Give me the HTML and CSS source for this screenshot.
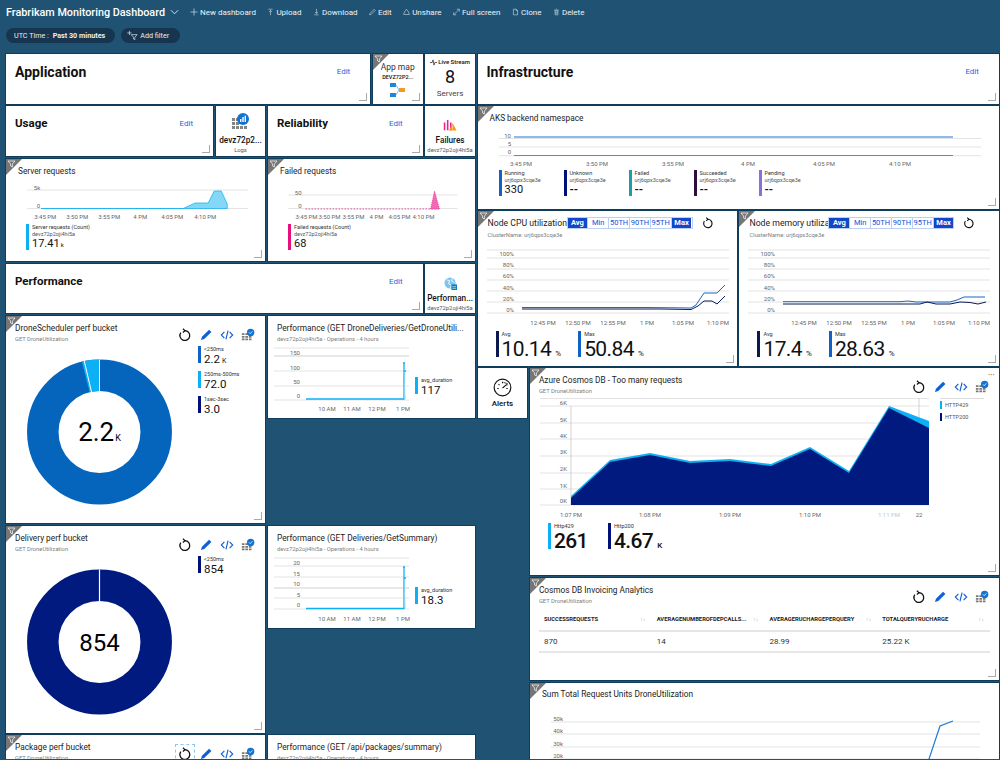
FILE: index.html
```html
<!DOCTYPE html>
<html lang="en">
<head>
    <meta charset="UTF-8">
    <meta name="viewport" content="width=device-width, initial-scale=1.0">
    <title>Frabrikam Monitoring Dashboard</title>
    <link rel="stylesheet" href="styles.css">
</head>
<body>
    <svg class="defs" width="0" height="0">
        <symbol id="i-corner" viewBox="0 0 16 16"><polygon points="0,0 16,0 0,16" fill="#767676"/><path d="M2 2h7L6.4 5v3L4.6 7V5Z" fill="none" stroke="#fff" stroke-width=".7"/></symbol>
        <symbol id="i-refresh" viewBox="0 0 16 16"><path d="M3.2 5.4A5.6 5.6 0 1 0 7.8 3" fill="none" stroke="#111" stroke-width="1.5"/><path d="M5.6 .8 8 3 5.6 5.2" fill="none" stroke="#111" stroke-width="1.4"/></symbol>
        <symbol id="i-pencil" viewBox="0 0 16 16"><path d="M11.5 2 14.2 4.6 6 12.6 2.2 13.8 3.4 10Z" fill="#0f5fd8"/></symbol>
        <symbol id="i-code" viewBox="0 0 16 16"><path d="M5 4.5 1.5 8 5 11.5M11 4.5 14.5 8 11 11.5M9.2 3 6.8 13" fill="none" stroke="#0f5fd8" stroke-width="1.3"/></symbol>
        <symbol id="i-grid" viewBox="0 0 16 16"><path d="M1 6h3v2H1zM5 6h3v2H5zM1 9h3v2H1zM5 9h3v2H5zM9 9h3v2H9zM1 12h3v2H1zM5 12h3v2H5zM9 12h3v2H9z" fill="#777"/><circle cx="11" cy="5" r="4.2" fill="#1173d4"/><path d="M9 5l1.5 1.5L13 3.8" fill="none" stroke="#fff" stroke-width=".9"/></symbol>
        <symbol id="t-plus" viewBox="0 0 10 10"><path d="M5 .5v9M.5 5h9" stroke="#dfe8ef" stroke-width=".8"/></symbol>
        <symbol id="t-up" viewBox="0 0 10 10"><path d="M2 1h6M5 9.5V3M2.8 5 5 2.8 7.2 5" fill="none" stroke="#dfe8ef" stroke-width=".8"/></symbol>
        <symbol id="t-down" viewBox="0 0 10 10"><path d="M2 9h6M5 .5V7M2.8 5 5 7.2 7.2 5" fill="none" stroke="#dfe8ef" stroke-width=".8"/></symbol>
        <symbol id="t-edit" viewBox="0 0 10 10"><path d="M7.2 1.2 8.8 2.8 3 8.6 1 9 1.4 7Z" fill="none" stroke="#dfe8ef" stroke-width=".8"/></symbol>
        <symbol id="t-share" viewBox="0 0 10 10"><path d="M1 8.6 2 5 5 1.2 8 5 9 8.6Z" fill="none" stroke="#dfe8ef" stroke-width=".8"/></symbol>
        <symbol id="t-full" viewBox="0 0 10 10"><path d="M1 9 9 1M5.5 1H9v3.5M1 5.5V9h3.5" fill="none" stroke="#dfe8ef" stroke-width=".8"/></symbol>
        <symbol id="t-clone" viewBox="0 0 10 10"><path d="M2 1h4l2 2v6H2Z M6 1v2h2" fill="none" stroke="#dfe8ef" stroke-width=".8"/></symbol>
        <symbol id="t-trash" viewBox="0 0 10 10"><path d="M1.5 2.5h7M3 2.5V9h4V2.5M4 1h2M4.2 4v3.5M5.8 4v3.5" fill="none" stroke="#dfe8ef" stroke-width=".8"/></symbol>
    </svg>

    <div class="toolbar">
        <span class="dash-title">Frabrikam Monitoring Dashboard</span>
        <svg class="chevron" viewBox="0 0 10 6"><path d="M1 1l4 4 4-4" fill="none" stroke="#fff" stroke-width=".9"/></svg>
        <span class="cmd cmd-new"><svg><use href="#t-plus"/></svg>New dashboard</span>
        <span class="cmd"><svg><use href="#t-up"/></svg>Upload</span>
        <span class="cmd"><svg><use href="#t-down"/></svg>Download</span>
        <span class="cmd"><svg><use href="#t-edit"/></svg>Edit</span>
        <span class="cmd"><svg><use href="#t-share"/></svg>Unshare</span>
        <span class="cmd"><svg><use href="#t-full"/></svg>Full screen</span>
        <span class="cmd"><svg><use href="#t-clone"/></svg>Clone</span>
        <span class="cmd"><svg><use href="#t-trash"/></svg>Delete</span>
    </div>
    <div class="filters">
        <span class="pill">UTC Time : <b>Past 30 minutes</b></span>
        <span class="pill pill-add"><svg viewBox="0 0 14 12"><path d="M4 .5v5M1.5 3h5M6 5h7L10.3 8v3L8.7 10V8Z" fill="none" stroke="#dfe8ef" stroke-width=".8"/></svg>Add filter</span>
    </div>

    <div class="board">
        <div class="tile section t-application rz"><h2 class="big">Application</h2><a class="edit">Edit</a></div>

        <div class="tile mini t-appmap rz">
            <svg class="corner"><use href="#i-corner"/></svg>
            <span class="mini-app">App map</span>
            <span class="mini-caps">DEVZ72P2...</span>
            <svg class="appmap-icon" viewBox="0 0 15 14"><path d="M0 0h6v4H0z M0 10h6v4H0z" fill="#1e88d8"/><path d="M6 2 9 7M6 12 9 7" stroke="#8cc3ea" stroke-width="1"/><path d="M9 5h6v4H9z" fill="#f59a1b"/></svg>
        </div>

        <div class="tile mini t-live">
            <span class="live-head"><svg viewBox="0 0 8 8"><path d="M0 4h2.5L3.500 1l1 6 1-3H8" fill="none" stroke="#222" stroke-width=".8"/></svg>Live Stream</span>
            <span class="live-num">8</span>
            <span class="live-sub">Servers</span>
        </div>

        <div class="tile section t-infra rz"><h2 class="big">Infrastructure</h2><a class="edit">Edit</a></div>

        <div class="tile section t-usage rz"><h2>Usage</h2><a class="edit">Edit</a></div>

        <div class="tile mini t-logs">
            <svg class="mini-icon" viewBox="0 0 18 18"><path d="M0 5h3v3H0zM4 5h3v3H4zM0 9h3v3H0zM4 9h3v3H4zM8 13h3v3H8zM0 13h3v3H0zM4 13h3v3H4zM12 13h3v3h-3z" fill="#858585"/><circle cx="11" cy="6" r="6" fill="#1173d4"/><path d="M8 6h1.400v3H8zM10.300 4h1.400v5h-1.400zM12.600 2.800H14V9h-1.400z" fill="#fff"/></svg>
            <span class="mini-name">devz72p2...</span>
            <span class="mini-sub">Logs</span>
        </div>

        <div class="tile section t-reliability rz"><h2>Reliability</h2><a class="edit">Edit</a></div>

        <div class="tile mini t-failures">
            <svg class="failures-icon" viewBox="0 0 18 14"><path d="M1 3h2v10H1zM5 0h2v13H5zM9 3h2v10H9z" fill="#ec1f8e"/><path d="M12.500 4 17.500 13.500h-10Z" fill="#f59a1b"/><path d="M12.100 7h.8v3.500h-.8zM12.100 11.200h.8v1h-.8z" fill="#fff"/></svg>
            <span class="mini-name">Failures</span>
            <span class="mini-sub">devz72p2oji4hi5a</span>
        </div>

        <div class="tile t-server rz">
            <svg class="corner"><use href="#i-corner"/></svg>
            <div class="head head-chart"><div class="head-text"><div class="title">Server requests</div></div></div>
            <svg class="chart server-chart" viewBox="6 185 259 37">
                <path class="grid-line" d="M27 190H248M27 208.500H248"/>
                <text class="ax" x="40" y="190" text-anchor="end">5k</text>
                <text class="ax" x="40" y="208" text-anchor="end">0</text>
                <path d="M41 208.500H183L195 203H208L214 191H221L227 204V208.500Z" fill="#83d7f7" stroke="#1cb2f0" stroke-width=".8"/>
                <text class="ax" x="45" y="219" text-anchor="middle">3:45 PM</text>
                <text class="ax" x="77" y="219" text-anchor="middle">3:50 PM</text>
                <text class="ax" x="109" y="219" text-anchor="middle">3:55 PM</text>
                <text class="ax" x="140" y="219" text-anchor="middle">4 PM</text>
                <text class="ax" x="172" y="219" text-anchor="middle">4:05 PM</text>
                <text class="ax" x="205" y="219" text-anchor="middle">4:10 PM</text>
            </svg>
            <div class="legend legend-tall">
                <div class="leg c-sky"><span class="leg-label">Server requests (Count)</span><span class="leg-sub">devz72p2oji4hi5a</span><span class="leg-val">17.41<small>k</small></span></div>
            </div>
        </div>

        <div class="tile t-failed rz">
            <svg class="corner"><use href="#i-corner"/></svg>
            <div class="head head-chart"><div class="head-text"><div class="title">Failed requests</div></div></div>
            <svg class="chart server-chart" viewBox="268 185 206 37">
                <path class="grid-line" d="M288 195H457M288 208.500H457"/>
                <text class="ax" x="301" y="195" text-anchor="end">50</text>
                <text class="ax" x="301" y="208" text-anchor="end">0</text>
                <path d="M305 209H440" stroke="#e8107f" stroke-width=".7" stroke-dasharray="1.5 1.5"/>
                <path d="M430 209 434 191 439 209Z" fill="#f26ab5" stroke="#e8107f" stroke-width=".6" stroke-dasharray="1 1"/>
                <text class="ax" x="306" y="219" text-anchor="middle">3:45 PM</text>
                <text class="ax" x="329" y="219" text-anchor="middle">3:50 PM</text>
                <text class="ax" x="353" y="219" text-anchor="middle">3:55 PM</text>
                <text class="ax" x="376" y="219" text-anchor="middle">4 PM</text>
                <text class="ax" x="399" y="219" text-anchor="middle">4:05 PM</text>
                <text class="ax" x="423" y="219" text-anchor="middle">4:10 PM</text>
            </svg>
            <div class="legend legend-tall">
                <div class="leg c-pink"><span class="leg-label">Failed requests (Count)</span><span class="leg-sub">devz72p2oji4hi5a</span><span class="leg-val">68</span></div>
            </div>
        </div>

        <div class="tile section t-performance rz"><h2>Performance</h2><a class="edit">Edit</a></div>

        <div class="tile mini t-perfmini">
            <svg class="perfmini-icon" viewBox="0 0 14 14"><circle cx="6.5" cy="6.5" r="6" fill="#7fc4ec"/><path d="M3 3l3 1-1 3 3 2-1 3M9 1.500 8 4l3 2" fill="none" stroke="#fff" stroke-width="1"/><path d="M8 8h6v6H8z" fill="#1173d4"/><path d="M9 10h4v1H9zM9 12h4v1H9z" fill="#9fe0a8"/></svg>
            <span class="mini-name">Performan...</span>
            <span class="mini-sub">devz72p2oji4hi5a</span>
        </div>

        <div class="tile t-nodecpu rz">
            <svg class="corner"><use href="#i-corner"/></svg>
            <div class="node-top">
                <div class="title node-title">Node CPU utilization ‘</div>
                <div class="strip"><span class="on">Avg</span><span>Min</span><span>50TH</span><span>90TH</span><span>95TH</span><span class="on">Max</span></div>
                <svg class="tool node-refresh"><use href="#i-refresh"/></svg>
            </div>
            <div class="sub node-sub">ClusterName: urj6qpx3cqe3e</div>
            <svg class="chart node-chart" viewBox="477 241 260 88">
                <path class="grid-line" d="M486 250H728M486 258H728M486 269H728M486 280H728M486 291H728M486 302H728M486 313H728"/>
                <text class="ax" x="513" y="256" text-anchor="end">100%</text>
                <text class="ax" x="513" y="267" text-anchor="end">80%</text>
                <text class="ax" x="513" y="278" text-anchor="end">60%</text>
                <text class="ax" x="513" y="290" text-anchor="end">40%</text>
                <text class="ax" x="513" y="301" text-anchor="end">20%</text>
                <text class="ax" x="513" y="312" text-anchor="end">0%</text>
                <path d="M521 307.500H645L690 308L695 305L703 293H716L724 285" fill="none" stroke="#1766c8" stroke-width="1"/>
                <path d="M521 309H660L690 309.500L697 306L703 301H711L716 304L724 296" fill="none" stroke="#0a1a5a" stroke-width="1"/>
                <text class="ax" x="542" y="325" text-anchor="middle">12:45 PM</text>
                <text class="ax" x="577" y="325" text-anchor="middle">12:50 PM</text>
                <text class="ax" x="612" y="325" text-anchor="middle">12:55 PM</text>
                <text class="ax" x="646" y="325" text-anchor="middle">1 PM</text>
                <text class="ax" x="682" y="325" text-anchor="middle">1:05 PM</text>
                <text class="ax" x="717" y="325" text-anchor="middle">1:10 PM</text>
            </svg>
            <div class="legend legend-huge">
                <div class="leg c-ink"><span class="leg-label">Avg</span><span class="leg-huge">10.14<small>%</small></span></div>
                <div class="leg c-blue"><span class="leg-label">Max</span><span class="leg-huge">50.84<small>%</small></span></div>
            </div>
        </div>

        <div class="tile t-nodemem rz">
            <svg class="corner"><use href="#i-corner"/></svg>
            <div class="node-top">
                <div class="title node-title">Node memory utilization</div>
                <div class="strip"><span class="on">Avg</span><span>Min</span><span>50TH</span><span>90TH</span><span>95TH</span><span class="on">Max</span></div>
                <svg class="tool node-refresh"><use href="#i-refresh"/></svg>
            </div>
            <div class="sub node-sub">ClusterName: urj6qpx3cqe3e</div>
            <svg class="chart node-chart" viewBox="739 241 260 88">
                <path class="grid-line" d="M748 250H990M748 258H990M748 269H990M748 280H990M748 291H990M748 302H990M748 313H990"/>
                <text class="ax" x="775" y="256" text-anchor="end">100%</text>
                <text class="ax" x="775" y="267" text-anchor="end">80%</text>
                <text class="ax" x="775" y="278" text-anchor="end">60%</text>
                <text class="ax" x="775" y="290" text-anchor="end">40%</text>
                <text class="ax" x="775" y="301" text-anchor="end">20%</text>
                <text class="ax" x="775" y="312" text-anchor="end">0%</text>
                <path d="M783 301.700H900L908 301L916 302H950L957 300L964 297H985" fill="none" stroke="#1766c8" stroke-width="1"/>
                <path d="M783 304H920L927 302L936 304H950L960 302L970 302.500L978 304L986 302" fill="none" stroke="#0a1a5a" stroke-width="1"/>
                <text class="ax" x="804" y="325" text-anchor="middle">12:45 PM</text>
                <text class="ax" x="839" y="325" text-anchor="middle">12:50 PM</text>
                <text class="ax" x="874" y="325" text-anchor="middle">12:55 PM</text>
                <text class="ax" x="908" y="325" text-anchor="middle">1 PM</text>
                <text class="ax" x="944" y="325" text-anchor="middle">1:05 PM</text>
                <text class="ax" x="979" y="325" text-anchor="middle">1:10 PM</text>
            </svg>
            <div class="legend legend-huge">
                <div class="leg c-ink"><span class="leg-label">Avg</span><span class="leg-huge">17.4<small>%</small></span></div>
                <div class="leg c-blue"><span class="leg-label">Max</span><span class="leg-huge">28.63<small>%</small></span></div>
            </div>
        </div>

        <div class="tile t-aks rz">
            <svg class="corner"><use href="#i-corner"/></svg>
            <div class="head head-short"><div class="head-text"><div class="title">AKS backend namespace</div></div></div>
            <svg class="chart aks-chart" viewBox="477 131 522 38">
                <path class="grid-line" d="M498 139.500H980M498 148H980M498 156.700H980"/>
                <text class="ax" x="510" y="139" text-anchor="end">10</text>
                <text class="ax" x="510" y="147" text-anchor="end">5</text>
                <text class="ax" x="510" y="155" text-anchor="end">0</text>
                <path d="M513 138H952" stroke="#1a78d8" stroke-width="1"/>
                <path d="M513 156.500H952" stroke="#8a6fd6" stroke-width="1"/>
                <text class="ax" x="520" y="167" text-anchor="middle">3:45 PM</text>
                <text class="ax" x="596" y="167" text-anchor="middle">3:50 PM</text>
                <text class="ax" x="672" y="167" text-anchor="middle">3:55 PM</text>
                <text class="ax" x="747" y="167" text-anchor="middle">4 PM</text>
                <text class="ax" x="823" y="167" text-anchor="middle">4:05 PM</text>
                <text class="ax" x="899" y="167" text-anchor="middle">4:10 PM</text>
            </svg>
            <div class="legend legend-tall legend-aks">
                <div class="leg c-blue"><span class="leg-label">Running</span><span class="leg-sub">urj6qpx3cqe3e</span><span class="leg-val">330</span></div>
                <div class="leg c-navy"><span class="leg-label">Unknown</span><span class="leg-sub">urj6qpx3cqe3e</span><span class="leg-val leg-dash">--</span></div>
                <div class="leg c-teal"><span class="leg-label">Failed</span><span class="leg-sub">urj6qpx3cqe3e</span><span class="leg-val leg-dash">--</span></div>
                <div class="leg c-plum"><span class="leg-label">Succeeded</span><span class="leg-sub">urj6qpx3cqe3e</span><span class="leg-val leg-dash">--</span></div>
                <div class="leg c-violet"><span class="leg-label">Pending</span><span class="leg-sub">urj6qpx3cqe3e</span><span class="leg-val leg-dash">--</span></div>
            </div>
        </div>

        <div class="tile t-drone rz">
            <svg class="corner"><use href="#i-corner"/></svg>
            <div class="head">
                <div class="head-text"><div class="title">DroneScheduler perf bucket</div><div class="sub">GET DroneUtilization</div></div>
                <div class="tools"><svg class="tool"><use href="#i-refresh"/></svg><svg class="tool"><use href="#i-pencil"/></svg><svg class="tool"><use href="#i-code"/></svg><svg class="tool"><use href="#i-grid"/></svg></div>
            </div>
            <div class="donut-body">
                <svg class="donut" viewBox="6 346 192 175">
                    <circle cx="99.5" cy="432" r="56.7" fill="none" stroke="#0565bd" stroke-width="31.5"/>
                    <path d="M99.500 375.300A56.700 56.700 0 0 0 85.800 377" fill="none" stroke="#0db0f5" stroke-width="31.5"/>
                    <path d="M99.500 359.500V391M84 360 91.500 392" stroke="#fff" stroke-width="1"/>
                    <text class="donut-num donut-num-lg" x="99.5" y="441" text-anchor="middle">2.2<tspan class="donut-unit" dx="1">K</tspan></text>
                </svg>
                <div class="legend-col">
                    <div class="leg leg-small c-blue"><span class="leg-label">&lt;250ms</span><span class="leg-mid">2.2<small>K</small></span></div>
                    <div class="leg leg-small c-sky"><span class="leg-label">250ms-500ms</span><span class="leg-mid">72.0</span></div>
                    <div class="leg leg-small c-navy"><span class="leg-label">1sec-3sec</span><span class="leg-mid">3.0</span></div>
                </div>
            </div>
        </div>

        <div class="tile t-perf1">
            <div class="head">
                <div class="head-text"><div class="title">Performance (GET DroneDeliveries/GetDroneUtili...</div><div class="sub">devz72p2oji4hi5a - Operations - 4 hours</div></div>
            </div>
            <div class="perf-body">
                <svg class="perf-chart" viewBox="268 346 146 70">
                    <path class="grid-line" d="M274 348H409M274 371H409M274 386H409M274 400H409"/>
                    <path d="M274 356H409" stroke="#e8e8e8" stroke-width="2"/>
                    <text class="ax" x="300" y="355" text-anchor="end">150</text>
                    <text class="ax" x="300" y="370" text-anchor="end">100</text>
                    <text class="ax" x="300" y="384" text-anchor="end">50</text>
                    <text class="ax" x="300" y="398" text-anchor="end">0</text>
                    <path d="M306 399H404V363" fill="none" stroke="#0db0f5" stroke-width="1.3"/>
                    <path d="M404 399V363L405.500 399Z" fill="#83d7f7"/>
                    <circle cx="404" cy="363" r="1" fill="#0db0f5"/>
                    <circle cx="405" cy="371" r="1" fill="#0db0f5"/>
                    <text class="ax" x="327" y="411" text-anchor="middle">10 AM</text>
                    <text class="ax" x="352" y="411" text-anchor="middle">11 AM</text>
                    <text class="ax" x="377" y="411" text-anchor="middle">12 PM</text>
                    <text class="ax" x="403" y="411" text-anchor="middle">1 PM</text>
                </svg>
                <div class="leg leg-small c-sky perf-leg"><span class="leg-label">avg_duration</span><span class="leg-mid">117</span></div>
            </div>
        </div>

        <div class="tile mini t-alerts">
            <svg class="alert-icon" viewBox="0 0 20 20"><circle cx="10" cy="10" r="8.8" fill="none" stroke="#111" stroke-width="1.2"/><path d="M10 10.500 15 6.500M4.500 11H6M14 11h1.500M5.800 6.500l1 1M10 4v1.500" stroke="#111" stroke-width="1.1" fill="none"/><path d="M11 4.500 15 6 14.500 8" stroke="#666" stroke-width="1.2" fill="none"/></svg>
            <span class="alert-name">Alerts</span>
        </div>

        <div class="tile t-cosmos rz">
            <svg class="corner"><use href="#i-corner"/></svg>
            <span class="more">•••</span>
            <div class="head">
                <div class="head-text"><div class="title">Azure Cosmos DB - Too many requests</div><div class="sub">GET DroneUtilization</div></div>
                <div class="tools"><svg class="tool"><use href="#i-refresh"/></svg><svg class="tool"><use href="#i-pencil"/></svg><svg class="tool"><use href="#i-code"/></svg><svg class="tool"><use href="#i-grid"/></svg></div>
            </div>
            <div class="cosmos-body">
                <svg class="cosmos-chart" viewBox="529 398 406 122">
                    <path class="grid-line" d="M539 398.500H928M539 406H928M539 423H928M539 439H928M539 456H928M539 473H928M539 489H928M539 505H928"/>
                    <text class="ax" x="566" y="405" text-anchor="end">6K</text>
                    <text class="ax" x="566" y="422" text-anchor="end">5K</text>
                    <text class="ax" x="566" y="438" text-anchor="end">4K</text>
                    <text class="ax" x="566" y="454" text-anchor="end">3K</text>
                    <text class="ax" x="566" y="471" text-anchor="end">2K</text>
                    <text class="ax" x="566" y="488" text-anchor="end">1K</text>
                    <text class="ax" x="566" y="503" text-anchor="end">0K</text>
                    <path d="M570 406V505M918 398V505" stroke="#c8c8c8" stroke-width=".8"/>
                    <path d="M570 496 609 460 649 453 689 461 729 459 770 464 809 447 848 471 888 406 928 421V505H570Z" fill="#0db0f5"/>
                    <path d="M570 498 609 462 649 455 689 463 729 461 770 466 809 449 848 473 888 408 928 428V505H570Z" fill="#001a80"/>
                    <text class="ax" x="570" y="517" text-anchor="middle">1:07 PM</text>
                    <text class="ax" x="649" y="517" text-anchor="middle">1:08 PM</text>
                    <text class="ax" x="729" y="517" text-anchor="middle">1:09 PM</text>
                    <text class="ax" x="809" y="517" text-anchor="middle">1:10 PM</text>
                    <text class="ax ax-faint" x="888" y="517" text-anchor="middle">1:11 PM</text>
                    <text class="ax" x="918" y="517" text-anchor="middle">22</text>
                </svg>
                <div class="side-legend">
                    <div class="side-item c-sky">HTTP429</div>
                    <div class="side-item c-navy">HTTP200</div>
                </div>
            </div>
            <div class="legend legend-huge legend-cosmos">
                <div class="leg c-sky"><span class="leg-label">Http429</span><span class="leg-huge leg-strong">261</span></div>
                <div class="leg c-navy"><span class="leg-label">Http200</span><span class="leg-huge leg-strong">4.67<small>K</small></span></div>
            </div>
        </div>

        <div class="tile t-delivery rz">
            <svg class="corner"><use href="#i-corner"/></svg>
            <div class="head">
                <div class="head-text"><div class="title">Delivery perf bucket</div><div class="sub">GET DroneUtilization</div></div>
                <div class="tools"><svg class="tool"><use href="#i-refresh"/></svg><svg class="tool"><use href="#i-pencil"/></svg><svg class="tool"><use href="#i-code"/></svg><svg class="tool"><use href="#i-grid"/></svg></div>
            </div>
            <div class="donut-body">
                <svg class="donut" viewBox="6 346 192 175">
                    <circle cx="99.5" cy="432" r="56.7" fill="none" stroke="#001a80" stroke-width="31.5"/>
                    <path d="M99.500 359.500V391" stroke="#fff" stroke-width="1.2"/>
                    <text class="donut-num" x="99.5" y="441" text-anchor="middle">854</text>
                </svg>
                <div class="legend-col">
                    <div class="leg leg-small c-navy"><span class="leg-label">&lt;250ms</span><span class="leg-mid">854</span></div>
                </div>
            </div>
        </div>

        <div class="tile t-perf2">
            <div class="head">
                <div class="head-text"><div class="title">Performance (GET Deliveries/GetSummary)</div><div class="sub">devz72p2oji4hi5a - Operations - 4 hours</div></div>
            </div>
            <div class="perf-body">
                <svg class="perf-chart" viewBox="268 556 146 70">
                    <path class="grid-line" d="M274 558H409M274 566H409M274 577H409M274 598H409M274 609H409"/>
                    <path d="M274 588H409" stroke="#e8e8e8" stroke-width="2"/>
                    <text class="ax" x="300" y="565" text-anchor="end">20</text>
                    <text class="ax" x="300" y="576" text-anchor="end">15</text>
                    <text class="ax" x="300" y="586" text-anchor="end">10</text>
                    <text class="ax" x="300" y="597" text-anchor="end">5</text>
                    <text class="ax" x="300" y="607" text-anchor="end">0</text>
                    <path d="M306 608.500H404V567" fill="none" stroke="#0db0f5" stroke-width="1.3"/>
                    <path d="M404 608V567L405.500 608Z" fill="#83d7f7"/>
                    <circle cx="404" cy="567" r="1" fill="#0db0f5"/>
                    <circle cx="405" cy="578" r="1" fill="#0db0f5"/>
                    <text class="ax" x="327" y="621" text-anchor="middle">10 AM</text>
                    <text class="ax" x="352" y="621" text-anchor="middle">11 AM</text>
                    <text class="ax" x="377" y="621" text-anchor="middle">12 PM</text>
                    <text class="ax" x="403" y="621" text-anchor="middle">1 PM</text>
                </svg>
                <div class="leg leg-small c-sky perf-leg"><span class="leg-label">avg_duration</span><span class="leg-mid">18.3</span></div>
            </div>
        </div>

        <div class="tile t-invoicing rz">
            <svg class="corner"><use href="#i-corner"/></svg>
            <div class="head">
                <div class="head-text"><div class="title">Cosmos DB Invoicing Analytics</div><div class="sub">GET DroneUtilization</div></div>
                <div class="tools"><svg class="tool"><use href="#i-refresh"/></svg><svg class="tool"><use href="#i-pencil"/></svg><svg class="tool"><use href="#i-code"/></svg><svg class="tool"><use href="#i-grid"/></svg></div>
            </div>
            <div class="table">
                <div class="th">SUCCESSREQUESTS<i>↑↓</i></div>
                <div class="th">AVERAGENUMBEROFDEPCALLS...<i>↑↓</i></div>
                <div class="th">AVERAGERUCHARGEPERQUERY<i>↑↓</i></div>
                <div class="th">TOTALQUERYRUCHARGE<i>↑↓</i></div>
                <div class="td">870</div>
                <div class="td">14</div>
                <div class="td">28.99</div>
                <div class="td">25.22 K</div>
            </div>
        </div>

        <div class="tile t-sum">
            <svg class="corner"><use href="#i-corner"/></svg>
            <div class="head head-sum"><div class="head-text"><div class="title">Sum Total Request Units DroneUtilization</div></div></div>
            <svg class="chart sum-chart" viewBox="530 713 469 60">
                <path class="grid-line" d="M551 722H980M551 734H980M551 747H980M551 759H980"/>
                <text class="ax" x="563" y="721" text-anchor="end">50k</text>
                <text class="ax" x="563" y="733" text-anchor="end">40k</text>
                <text class="ax" x="563" y="746" text-anchor="end">30k</text>
                <text class="ax" x="563" y="758" text-anchor="end">20k</text>
                <path d="M928 762 940 726 953 721" fill="none" stroke="#1a78d8" stroke-width="1.2"/>
            </svg>
        </div>

        <div class="tile t-package">
            <svg class="corner"><use href="#i-corner"/></svg>
            <div class="head">
                <div class="head-text"><div class="title">Package perf bucket</div><div class="sub">GET DroneUtilization</div></div>
                <div class="tools"><svg class="tool tool-focus"><use href="#i-refresh"/></svg><svg class="tool"><use href="#i-pencil"/></svg><svg class="tool"><use href="#i-code"/></svg><svg class="tool"><use href="#i-grid"/></svg></div>
            </div>
        </div>

        <div class="tile t-perf3">
            <div class="head">
                <div class="head-text"><div class="title">Performance (GET /api/packages/summary)</div><div class="sub">devz72p2oji4hi5a - Operations - 4 hours</div></div>
            </div>
        </div>
    </div>
</body>
</html>
```

FILE: styles.css
```css
html, body {
    margin: 0;
    height: 760px;
    overflow: hidden;
}
body {
    background: #205273;
    font-family: Roboto, "Open Sans", sans-serif;
    color: #111;
}
.defs {
    position: absolute;
}

/* top bar */
.toolbar {
    display: flex;
    align-items: center;
    height: 24px;
    padding-left: 6px;
    color: #eef3f7;
}
.dash-title {
    width: 164px;
    font-size: 10.8px;
    font-weight: 500;
    color: #fff;
    white-space: nowrap;
}
.chevron {
    width: 9px;
    height: 6px;
    margin-right: 11px;
}
.cmd {
    display: flex;
    align-items: center;
    gap: 2px;
    margin-right: 11.5px;
    font-size: 8px;
    white-space: nowrap;
}
.cmd svg {
    width: 7px;
    height: 8px;
}
.cmd-new svg {
    width: 8px;
}
.filters {
    display: flex;
    gap: 6px;
    height: 16px;
    margin-top: 4px;
    padding-left: 6px;
}
.pill {
    display: flex;
    align-items: center;
    gap: 2px;
    height: 15px;
    padding: 0 10px 0 8px;
    border-radius: 8px;
    background: #17354e;
    color: #e8eef3;
    font-size: 7.2px;
    white-space: pre;
}
.pill b {
    font-weight: 700;
}
.pill-add {
    padding: 0 11px 0 5px;
}
.pill-add svg {
    width: 12px;
    height: 11px;
}

/* tile board */
.board {
    display: grid;
    grid-template-columns: repeat(19, 49.9px);
    grid-template-rows: repeat(17, 49.9px);
    gap: 2.5px;
    height: 705px;
    margin-top: 9px;
    padding: 1px 0 0 6px;
    overflow: hidden;
}
.tile {
    position: relative;
    overflow: hidden;
    background: #fff;
    box-shadow: 0 0 0 1px #113d5c;
}
.rz::after {
    content: "";
    position: absolute;
    right: 3px;
    bottom: 3px;
    width: 7px;
    height: 7px;
    border-right: 1px solid #aaa;
    border-bottom: 1px solid #aaa;
}
.corner {
    position: absolute;
    left: 0;
    top: 0;
    width: 16px;
    height: 16px;
}
.more {
    position: absolute;
    top: 4px;
    right: 4px;
    font-size: 5px;
    color: #666;
    letter-spacing: .5px;
}

.t-application { grid-column: 1 / 8; grid-row: 1 / 2; }
.t-appmap { grid-column: 8 / 9; grid-row: 1 / 2; }
.t-live { grid-column: 9 / 10; grid-row: 1 / 2; }
.t-infra { grid-column: 10 / 20; grid-row: 1 / 2; }
.t-usage { grid-column: 1 / 5; grid-row: 2 / 3; }
.t-logs { grid-column: 5 / 6; grid-row: 2 / 3; }
.t-reliability { grid-column: 6 / 9; grid-row: 2 / 3; }
.t-failures { grid-column: 9 / 10; grid-row: 2 / 3; }
.t-aks { grid-column: 10 / 20; grid-row: 2 / 4; }
.t-server { grid-column: 1 / 6; grid-row: 3 / 5; }
.t-failed { grid-column: 6 / 10; grid-row: 3 / 5; }
.t-nodecpu { grid-column: 10 / 15; grid-row: 4 / 7; }
.t-nodemem { grid-column: 15 / 20; grid-row: 4 / 7; }
.t-performance { grid-column: 1 / 9; grid-row: 5 / 6; }
.t-perfmini { grid-column: 9 / 10; grid-row: 5 / 6; }
.t-drone { grid-column: 1 / 6; grid-row: 6 / 10; }
.t-perf1 { grid-column: 6 / 10; grid-row: 6 / 8; }
.t-alerts { grid-column: 10 / 11; grid-row: 7 / 8; }
.t-cosmos { grid-column: 11 / 20; grid-row: 7 / 11; }
.t-delivery { grid-column: 1 / 6; grid-row: 10 / 14; }
.t-perf2 { grid-column: 6 / 10; grid-row: 10 / 12; }
.t-invoicing { grid-column: 11 / 20; grid-row: 11 / 13; }
.t-sum { grid-column: 11 / 20; grid-row: 13 / 18; }
.t-package { grid-column: 1 / 6; grid-row: 14 / 18; }
.t-perf3 { grid-column: 6 / 10; grid-row: 14 / 16; }

/* section header tiles */
.section {
    display: flex;
    align-items: flex-start;
    justify-content: space-between;
    padding: 9px 20px 0 9px;
}
.section h2 {
    margin: 0;
    font-size: 11.5px;
    line-height: 17px;
    font-weight: 700;
}
.section h2.big {
    font-size: 14px;
    line-height: 18px;
}
.edit {
    font-size: 8px;
    line-height: 18px;
    color: #2566e0;
}

/* small launch tiles */
.mini {
    display: flex;
    flex-direction: column;
    align-items: center;
    white-space: nowrap;
}
.mini-icon {
    width: 18px;
    height: 18px;
    margin-top: 7px;
}
.failures-icon {
    width: 14px;
    height: 11px;
    margin-top: 14px;
}
.perfmini-icon {
    width: 13px;
    height: 13px;
    margin-top: 13px;
}
.mini-name {
    margin-top: 3px;
    font-size: 8.2px;
    line-height: 12px;
    font-weight: 500;
}
.t-perfmini .mini-name {
    margin-top: 2px;
}
.mini-sub {
    font-size: 5.8px;
    line-height: 8px;
    color: #555;
}
.mini-app {
    margin-top: 7px;
    font-size: 8.5px;
    line-height: 12px;
    color: #333;
}
.mini-caps {
    font-size: 5.5px;
    line-height: 8px;
    font-weight: 500;
}
.appmap-icon {
    width: 15px;
    height: 14px;
    margin-top: 2px;
}
.live-head {
    display: flex;
    align-items: center;
    gap: 1px;
    margin-top: 4px;
    font-size: 6px;
    line-height: 8px;
    font-weight: 500;
}
.live-head svg {
    width: 7px;
    height: 7px;
}
.live-num {
    font-size: 18px;
    line-height: 20px;
    margin-top: 1px;
}
.live-sub {
    margin-top: 2px;
    font-size: 8px;
    line-height: 10px;
    color: #444;
}
.alert-icon {
    width: 19px;
    height: 19px;
    margin-top: 10px;
}
.alert-name {
    margin-top: 1px;
    font-size: 8px;
    line-height: 12px;
    font-weight: 500;
}

/* tile header */
.head {
    display: flex;
    justify-content: space-between;
    height: 30px;
    padding: 6px 10px 0 9px;
    box-sizing: border-box;
}
.head-chart {
    height: 26px;
    padding-left: 12px;
}
.head-short {
    height: 24px;
    padding-left: 12px;
}
.head-sum {
    padding: 5px 0 0 12px;
}
.head-text {
    min-width: 0;
}
.title {
    font-size: 8.3px;
    line-height: 13px;
    white-space: nowrap;
    color: #222;
}
.sub {
    font-size: 5.8px;
    line-height: 9px;
    color: #808080;
    white-space: nowrap;
}
.tools {
    display: flex;
    gap: 7px;
    margin-top: 6px;
}
.tool {
    flex: none;
    width: 14px;
    height: 14px;
}
.tool-focus {
    outline: 1px dashed #8cc8ee;
    outline-offset: 2px;
}

/* node tiles with the buttons strip */
.node-top {
    display: flex;
    align-items: center;
    height: 12px;
    padding: 6px 0 0 10px;
}
.node-title {
    flex: none;
    width: 79px;
    overflow: hidden;
    font-size: 8.7px;
}
.strip {
    display: flex;
    flex: none;
    width: 126px;
    height: 12px;
    border: 1px solid #bcd0f3;
    box-sizing: border-box;
    font-size: 7.5px;
    line-height: 10px;
    color: #1450d8;
}
.strip span {
    flex: 1;
    text-align: center;
    border-right: 1px solid #bcd0f3;
}
.strip span:last-child {
    border-right: 0;
}
.strip .on {
    background: #0f49c9;
    color: #fff;
    font-weight: 700;
}
.node-refresh {
    width: 12px;
    height: 12px;
    margin-left: 9px;
}
.node-sub {
    height: 11px;
    margin-top: 1px;
    padding-left: 10px;
    line-height: 10px;
}

/* charts */
.chart, .perf-chart, .cosmos-chart, .donut {
    display: block;
}
.server-chart {
    width: 100%;
    height: 37px;
}
.aks-chart {
    width: 522px;
    height: 38px;
}
.node-chart {
    width: 260px;
    height: 88px;
}
.sum-chart {
    width: 469px;
    height: 60px;
}
.grid-line {
    stroke: #e3e3e3;
    stroke-width: 1;
    fill: none;
}
.ax {
    font-size: 6px;
    fill: #666;
}
.ax-faint {
    fill: #c8c8c8;
}
.perf-body {
    display: flex;
}
.perf-chart {
    flex: none;
    width: 146px;
    height: 70px;
}
.perf-leg {
    margin: 31px 0 0 1px;
}
.donut-body {
    display: flex;
}
.donut {
    flex: none;
    width: 192px;
    height: 175px;
}
.donut-num {
    font-size: 24px;
    fill: #000;
}
.donut-num-lg {
    font-size: 26px;
}
.donut-unit {
    font-size: 9px;
}
.legend-col {
    display: flex;
    flex-direction: column;
    gap: 8px;
}
.cosmos-body {
    display: flex;
}
.cosmos-chart {
    flex: none;
    width: 406px;
    height: 122px;
}
.side-legend {
    display: flex;
    flex-direction: column;
    gap: 4px;
    width: 44px;
    height: 20px;
    margin-left: 4px;
    padding-top: 2px;
    border-top: 1px solid #ddd;
}
.side-item {
    height: 8px;
    padding-left: 3px;
    border-left: 2.5px solid;
    font-size: 5.6px;
    line-height: 8px;
    color: #555;
}

/* legends under charts */
.legend {
    display: flex;
}
.legend-tall {
    margin-top: 2px;
    padding-left: 20px;
}
.legend-aks {
    padding-left: 21px;
}
.legend-aks .leg {
    width: 59px;
}
.legend-huge {
    gap: 17px;
    margin-top: 2px;
    padding-left: 18px;
}
.legend-cosmos {
    gap: 20px;
    margin-top: 3px;
}
.leg {
    display: flex;
    flex-direction: column;
    flex: none;
    height: 26px;
    padding-left: 3px;
    border-left: 3px solid;
    color: #111;
    white-space: nowrap;
}
.leg-small {
    height: 17px;
}
.leg-label, .leg-sub {
    font-size: 5.5px;
    line-height: 7px;
    color: #333;
}
.leg-sub {
    color: #555;
}
.leg-val {
    font-size: 11px;
    line-height: 12px;
}
.leg-val small {
    margin-left: 1px;
    font-size: 6px;
}
.leg-dash {
    font-weight: 700;
}
.leg-mid {
    font-size: 11.5px;
    line-height: 12px;
}
.leg-mid small {
    margin-left: 2px;
    font-size: 7px;
}
.leg-huge {
    margin-top: 2px;
    font-size: 21px;
    line-height: 19px;
    letter-spacing: -.6px;
}
.leg-huge small {
    margin-left: 4px;
    font-size: 8px;
    letter-spacing: 0;
}
.leg-strong {
    font-weight: 500;
}
.c-sky { border-left-color: #0db0f5; }
.c-pink { border-left-color: #e8107f; }
.c-blue { border-left-color: #0f62c8; }
.c-navy { border-left-color: #00107a; }
.c-ink { border-left-color: #0a1a4a; }
.c-teal { border-left-color: #1a9fa8; }
.c-plum { border-left-color: #2e0f3c; }
.c-violet { border-left-color: #8a6fd6; }

/* table tile */
.table {
    display: grid;
    grid-template-columns: repeat(4, 112.8px);
    margin-left: 9px;
}
.th {
    display: flex;
    justify-content: space-between;
    height: 22px;
    padding: 0 6px 0 5px;
    border-bottom: 2px solid #e6e6e6;
    font-size: 5.8px;
    font-weight: 700;
    line-height: 22px;
    color: #222;
    white-space: nowrap;
}
.th i {
    font-style: normal;
    font-weight: 400;
    color: #aaa;
}
.td {
    height: 19px;
    padding-left: 5px;
    border-bottom: 2px solid #e6e6e6;
    font-size: 8px;
    line-height: 20px;
    color: #333;
}
```
